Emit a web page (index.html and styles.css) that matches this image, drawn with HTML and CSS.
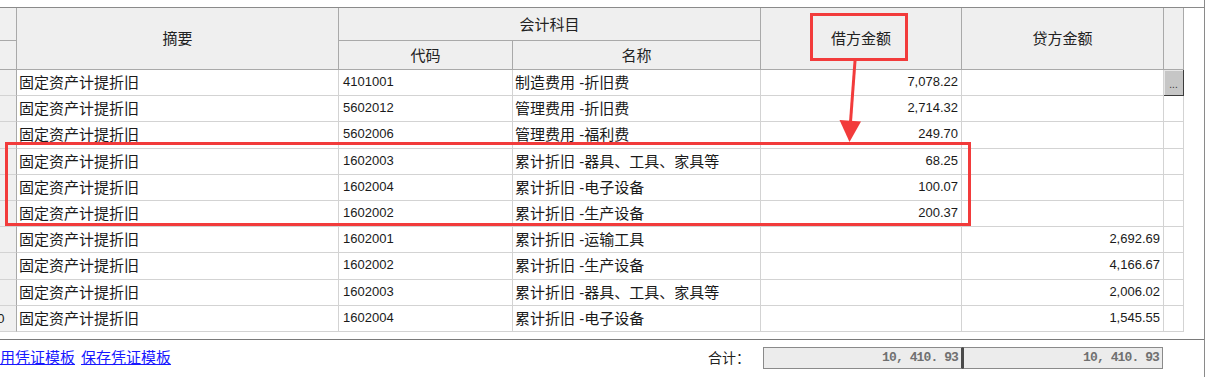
FILE: index.html
```html
<!DOCTYPE html>
<html lang="zh-CN">
<head>
<meta charset="utf-8">
<title>凭证</title>
<link rel="stylesheet" href="styles.css">
</head>
<body>
<div class="frame">
  <div class="sheet">
    <div class="grid">
      <div class="cell h rh"></div>
      <div class="cell h span-r">摘要</div>
      <div class="cell h span-c">会计科目</div>
      <div class="cell h span-r">借方金额</div>
      <div class="cell h span-r">贷方金额</div>
      <div class="cell h span-r"></div>
      <div class="cell h rh"></div>
      <div class="cell h">代码</div>
      <div class="cell h">名称</div>

      <div class="cell rh"></div><div class="cell">固定资产计提折旧</div><div class="cell num">4101001</div><div class="cell">制造费用 -折旧费</div><div class="cell amt">7,078.22</div><div class="cell amt"></div><div class="cell btn">...</div>
      <div class="cell rh"></div><div class="cell">固定资产计提折旧</div><div class="cell num">5602012</div><div class="cell">管理费用 -折旧费</div><div class="cell amt">2,714.32</div><div class="cell amt"></div><div class="cell"></div>
      <div class="cell rh"></div><div class="cell">固定资产计提折旧</div><div class="cell num">5602006</div><div class="cell">管理费用 -福利费</div><div class="cell amt">249.70</div><div class="cell amt"></div><div class="cell"></div>
      <div class="cell rh"></div><div class="cell">固定资产计提折旧</div><div class="cell num">1602003</div><div class="cell">累计折旧 -器具、工具、家具等</div><div class="cell amt">68.25</div><div class="cell amt"></div><div class="cell"></div>
      <div class="cell rh"></div><div class="cell">固定资产计提折旧</div><div class="cell num">1602004</div><div class="cell">累计折旧 -电子设备</div><div class="cell amt">100.07</div><div class="cell amt"></div><div class="cell"></div>
      <div class="cell rh"></div><div class="cell">固定资产计提折旧</div><div class="cell num">1602002</div><div class="cell">累计折旧 -生产设备</div><div class="cell amt">200.37</div><div class="cell amt"></div><div class="cell"></div>
      <div class="cell rh"></div><div class="cell">固定资产计提折旧</div><div class="cell num">1602001</div><div class="cell">累计折旧 -运输工具</div><div class="cell amt"></div><div class="cell amt">2,692.69</div><div class="cell"></div>
      <div class="cell rh"></div><div class="cell">固定资产计提折旧</div><div class="cell num">1602002</div><div class="cell">累计折旧 -生产设备</div><div class="cell amt"></div><div class="cell amt">4,166.67</div><div class="cell"></div>
      <div class="cell rh"></div><div class="cell">固定资产计提折旧</div><div class="cell num">1602003</div><div class="cell">累计折旧 -器具、工具、家具等</div><div class="cell amt"></div><div class="cell amt">2,006.02</div><div class="cell"></div>
      <div class="cell rh"><span class="rownum">10</span></div><div class="cell">固定资产计提折旧</div><div class="cell num">1602004</div><div class="cell">累计折旧 -电子设备</div><div class="cell amt"></div><div class="cell amt">1,545.55</div><div class="cell"></div>
    </div>
  </div>

  <div class="footer">
    <div class="links">
      <a class="link" href="#">引用凭证模板</a>
      <a class="link" href="#">保存凭证模板</a>
    </div>
    <div class="label">合计：</div>
    <div class="tot tot-a">10, 410. 93</div>
    <div class="tot tot-b">10, 410. 93</div>
  </div>

  <div class="mark mark-head"></div>
  <div class="mark mark-rows"></div>
  <svg class="arrow" width="1208" height="377" viewBox="0 0 1208 377">
    <line x1="855" y1="61" x2="850.5" y2="122" stroke="#f23b3b" stroke-width="3"/>
    <polygon points="839.5,120 861,121.5 849.5,142" fill="#f23b3b"/>
  </svg>
</div>
</body>
</html>
```

FILE: styles.css
```css
html, body {
  margin: 0;
  padding: 0;
  background: #ffffff;
}

body {
  font-family: "Liberation Sans", "Noto Sans CJK SC", sans-serif;
  color: #1a1a1a;
  overflow: hidden;
}

.frame {
  position: relative;
  width: 1205px;
  height: 377px;
  box-sizing: border-box;
  border-right: 1px solid #8a8a8a;
  padding-top: 7px;
}

.sheet {
  border-top: 1px solid #8a8a8a;
}

.grid {
  display: grid;
  width: 1184px;
  grid-template-columns: 17px 322px 174px 248px 201px 202px 20px;
  grid-template-rows: 33px 29px;
  grid-auto-rows: 26.2px;
}

.cell {
  box-sizing: border-box;
  display: flex;
  align-items: center;
  padding: 0 2px;
  border-right: 1px solid #d3d3d3;
  border-bottom: 1px solid #d3d3d3;
  font-size: 15px;
  line-height: 1;
  white-space: nowrap;
  overflow: hidden;
  background: #ffffff;
}

.h {
  background: #efefef;
  border-color: #a9a9a9;
  justify-content: center;
  color: #222222;
}

.span-r {
  grid-row: span 2;
}

.span-c {
  grid-column: span 2;
}

.rh {
  background: #f0f0f0;
  border-right-color: #a9a9a9;
  padding: 0;
  font-size: 13px;
}

.rownum {
  margin-left: -10px;
  margin-top: 1px;
}

.num {
  font-size: 13px;
  padding-left: 4px;
  padding-bottom: 2px;
}

.amt {
  justify-content: flex-end;
  font-size: 13px;
  padding-right: 3px;
  padding-bottom: 2px;
}

.btn {
  justify-content: center;
  align-items: flex-end;
  background: #c6c6c6;
  border-right: 1px solid #3c3c3c;
  border-bottom: 1px solid #3c3c3c;
  box-shadow: inset 1px 1px 0 #e6e6e6;
  font-size: 10px;
  color: #333333;
  padding: 0 0 5px 0;
}

.footer {
  margin-top: 7px;
  border-top: 1px solid #7a7a7a;
  padding: 7px 41px 0 0;
  display: flex;
  align-items: center;
}

.links {
  display: flex;
  gap: 6px;
  margin-left: -15px;
  flex: 1;
}

.link {
  font-size: 15px;
  line-height: 1;
  color: #1818ff;
  text-decoration: underline;
}

.label {
  font-size: 14px;
  line-height: 1;
  color: #222222;
  margin-right: 13px;
}

.tot {
  box-sizing: border-box;
  width: 200px;
  height: 22px;
  border: 1px solid #8a8a8a;
  background: #ececec;
  font-family: "Liberation Mono", "DejaVu Sans Mono", monospace;
  font-weight: bold;
  font-size: 13px;
  letter-spacing: -0.9px;
  line-height: 20px;
  color: #707070;
  text-align: right;
  padding-right: 3px;
}

.tot-a {
  border-right: 2px solid #4a4a4a;
}

.tot-b {
  border-left: 1px solid #4a4a4a;
}

.mark {
  position: absolute;
  box-sizing: border-box;
  border: 3px solid #f23b3b;
  pointer-events: none;
}

.mark-head {
  left: 810px;
  top: 13px;
  width: 98px;
  height: 48px;
}

.mark-rows {
  left: 5px;
  top: 142px;
  width: 966px;
  height: 84px;
}

.arrow {
  position: absolute;
  left: 0;
  top: 0;
  pointer-events: none;
}
```
